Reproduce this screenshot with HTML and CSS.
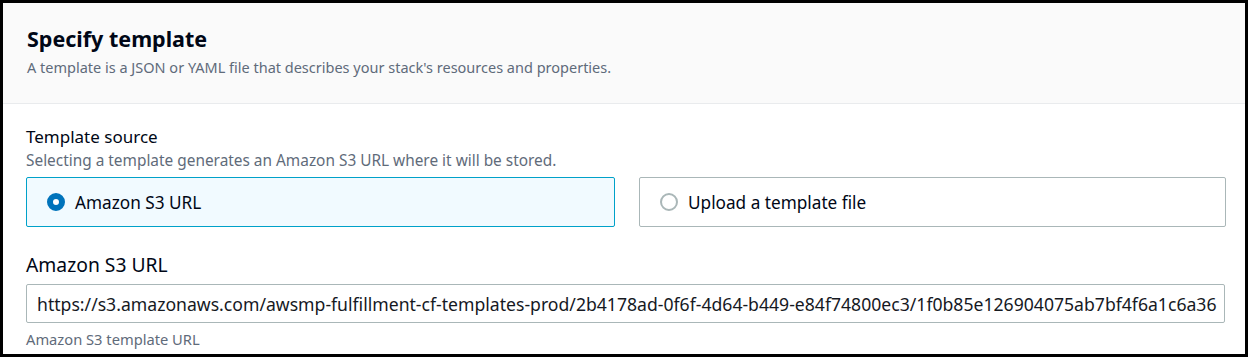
FILE: index.html
```html
<!doctype html>
<html lang="en">
    <head>
        <meta charset="UTF-8" />
        <title>Specify template</title>
        <link rel="stylesheet" href="styles.css">
    </head>
    <body>
        <div class="panel">
            <div class="panel-header">
                <h2>Specify template</h2>
                <p class="panel-desc">
                    A template is a JSON or YAML file that describes your stack's resources and properties.
                </p>
            </div>

            <div class="panel-body">
                <div class="field">
                    <div class="field-label">Template source</div>
                    <div class="field-desc">Selecting a template generates an Amazon S3 URL where it will be stored.</div>
                    <div class="tiles">
                        <label class="tile tile-selected">
                            <span class="radio radio-checked"></span>
                            <span class="tile-label">Amazon S3 URL</span>
                        </label>
                        <label class="tile">
                            <span class="radio"></span>
                            <span class="tile-label">Upload a template file</span>
                        </label>
                    </div>
                </div>

                <div class="field field-url">
                    <div class="field-label field-label-lg">Amazon S3 URL</div>
                    <div class="text-input">https://s3.amazonaws.com/awsmp-fulfillment-cf-templates-prod/2b4178ad-0f6f-4d64-b449-e84f74800ec3/1f0b85e126904075ab7bf4f6a1c6a36</div>
                    <div class="field-hint">Amazon S3 template URL</div>
                </div>
            </div>
        </div>
    </body>
</html>
```

FILE: styles.css
```css
html,
body {
    margin: 0;
    padding: 0;
}

body {
    background: #ffffff;
    font-family: "Noto Sans", "Open Sans", sans-serif;
    color: #000716;
}

.panel {
    box-sizing: border-box;
    width: 1248px;
    height: 357px;
    border: 3px solid #000000;
    overflow: hidden;
    background: #ffffff;
}

.panel-header {
    background: #fafafa;
    border-bottom: 1px solid #e9ebed;
    padding: 24px 24px 22px;
    height: 54px;
}

.panel-header h2 {
    margin: 0;
    font-size: 21.5px;
    line-height: 24px;
    font-weight: 700;
    color: #000716;
}

.panel-desc {
    margin: 6px 0 0;
    font-size: 14.5px;
    line-height: 20px;
    color: #5f6b7a;
}

.panel-body {
    padding: 22px 19px 0 23px;
}

.field-label {
    font-size: 17px;
    line-height: 22px;
    color: #000716;
}

.field-label-lg {
    font-size: 19.3px;
    line-height: 24px;
}

.field-desc {
    margin-top: 3px;
    font-size: 15.4px;
    line-height: 20px;
    color: #5f6b7a;
}

.field-hint {
    margin-top: 7px;
    font-size: 14.7px;
    line-height: 18px;
    color: #5f6b7a;
}

.tiles {
    display: grid;
    grid-template-columns: 589px 587px;
    gap: 24px;
    margin-top: 6px;
}

.tile {
    box-sizing: border-box;
    height: 50px;
    display: flex;
    align-items: center;
    gap: 10px;
    padding: 0 20px;
    border: 1px solid #aab7b8;
    border-radius: 2px;
    background: #ffffff;
}

.tile-selected {
    background: #f1faff;
    border-color: #00a1c9;
}

.radio {
    box-sizing: border-box;
    flex: none;
    width: 18px;
    height: 18px;
    border-radius: 50%;
    border: 2px solid #aab7b8;
    background: #ffffff;
}

.radio-checked {
    border: 6px solid #0073bb;
}

.tile-label {
    font-size: 17.2px;
    color: #000716;
}

.field-url {
    margin-top: 26px;
}

.text-input {
    box-sizing: border-box;
    margin-top: 7px;
    width: 1199px;
    height: 39px;
    padding: 0 10px;
    display: flex;
    align-items: center;
    border: 1px solid #aab7b8;
    border-radius: 2px;
    font-size: 17.62px;
    white-space: nowrap;
    overflow: hidden;
    color: #16191f;
}
```
